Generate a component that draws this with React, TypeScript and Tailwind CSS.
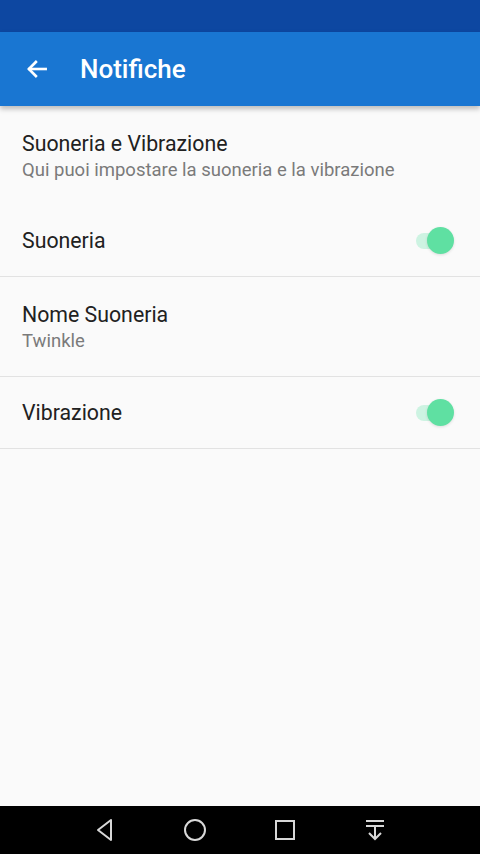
import React from "react";

function Toggle() {
  return (
    <div className="relative w-[44px] h-[30px] flex items-center">
      <div className="absolute left-[2px] w-[36px] h-[16px] rounded-full bg-[#cdf3e2]" />
      <div className="absolute left-[13px] w-[27px] h-[27px] rounded-full bg-[#5fe0a2] shadow-[0_1px_3px_rgba(0,0,0,0.12)]" />
    </div>
  );
}

export default function App() {
  return (
    <div
      className="w-[480px] h-[854px] flex flex-col bg-[#fafafa] overflow-hidden"
      style={{ fontFamily: "Roboto, 'Noto Sans', sans-serif" }}
    >
      <div className="h-[32px] bg-[#0d47a1] shrink-0" />
      <div className="h-[74px] bg-[#1976d2] shrink-0 flex items-center shadow-[0_3px_5px_rgba(0,0,0,0.25)] relative z-10">
        <div className="w-[80px] pl-[24px] flex items-center">
          <svg width="26" height="26" viewBox="0 0 24 24" fill="none" stroke="white" strokeWidth="2.4" strokeLinecap="square">
            <path d="M20 12H5" />
            <path d="M11 5.5L4.5 12L11 18.5" />
          </svg>
        </div>
        <span className="text-white text-[26px] font-medium">Notifiche</span>
      </div>
      <div className="flex-1 flex flex-col">
        <div className="px-[22px] pt-[24px] pb-[22px] flex flex-col">
          <span className="text-[21.3px] leading-[27px] text-[#212121]">Suoneria e Vibrazione</span>
          <span className="text-[18.5px] leading-[26px] text-[#7a7a7a]">Qui puoi impostare la suoneria e la vibrazione</span>
        </div>
        <div className="h-[72px] px-[22px] flex items-center justify-between border-b border-[#e2e2e2]">
          <span className="text-[21.3px] text-[#212121]">Suoneria</span>
          <Toggle />
        </div>
        <div className="px-[22px] pt-[24px] pb-[22px] flex flex-col border-b border-[#e2e2e2]">
          <span className="text-[21.3px] leading-[27px] text-[#212121]">Nome Suoneria</span>
          <span className="text-[18.5px] leading-[26px] text-[#7a7a7a]">Twinkle</span>
        </div>
        <div className="h-[72px] px-[22px] flex items-center justify-between border-b border-[#e2e2e2]">
          <span className="text-[21.3px] text-[#212121]">Vibrazione</span>
          <Toggle />
        </div>
      </div>
      <div className="h-[48px] bg-black shrink-0 flex items-center justify-center gap-[60px]">
        <svg width="30" height="30" viewBox="0 0 30 30" fill="none" stroke="#d8d8d8" strokeWidth="2" strokeLinejoin="round">
          <path d="M21 5L8 15L21 25Z" />
        </svg>
        <svg width="30" height="30" viewBox="0 0 30 30" fill="none" stroke="#d8d8d8" strokeWidth="2">
          <circle cx="15" cy="15" r="10" />
        </svg>
        <svg width="30" height="30" viewBox="0 0 30 30" fill="none" stroke="#d8d8d8" strokeWidth="2">
          <rect x="6" y="6" width="18" height="18" />
        </svg>
        <svg width="30" height="30" viewBox="0 0 30 30" fill="none" stroke="#d8d8d8" strokeWidth="2">
          <path d="M6 6H24" />
          <path d="M6 11H24" />
          <path d="M15 11V24" />
          <path d="M9 18L15 24L21 18" />
        </svg>
      </div>
    </div>
  );
}
